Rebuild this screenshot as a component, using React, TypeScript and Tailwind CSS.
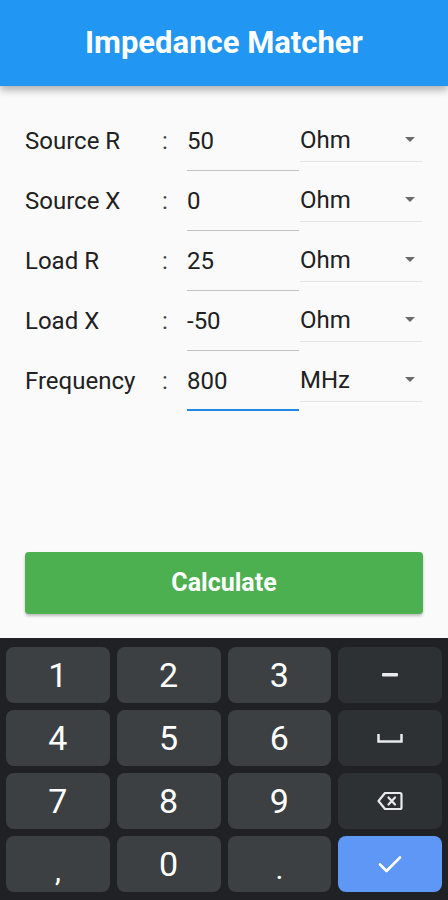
import React from "react";

const rows = [
  { label: "Source R", value: "50", unit: "Ohm" },
  { label: "Source X", value: "0", unit: "Ohm" },
  { label: "Load R", value: "25", unit: "Ohm" },
  { label: "Load X", value: "-50", unit: "Ohm" },
  { label: "Frequency", value: "800", unit: "MHz", focused: true },
];

function Arrow() {
  return (
    <svg width="10" height="5" viewBox="0 0 10 5" className="block">
      <path d="M0 0 L10 0 L5 5 Z" fill="#6b6b6b" />
    </svg>
  );
}

function Key({ children, variant = "num" }: { children: React.ReactNode; variant?: "num" | "fn" | "go" }) {
  const bg =
    variant === "num" ? "bg-[#3c4043]" : variant === "fn" ? "bg-[#2e3134]" : "bg-[#5e97f6]";
  return (
    <div
      className={`${bg} h-[56px] rounded-[8px] flex items-center justify-center text-white text-[34px] leading-none`}
    >
      {children}
    </div>
  );
}

export default function App() {
  return (
    <div
      className="w-[448px] h-[900px] bg-[#fafafa] flex flex-col overflow-hidden"
      style={{ fontFamily: "Roboto, 'Noto Sans', sans-serif" }}
    >
      <div className="h-[86px] bg-[#2196f3] flex items-center justify-center shadow-[0_4px_8px_rgba(0,0,0,0.3)] relative z-10 shrink-0">
        <span className="text-white text-[31px] font-bold">Impedance Matcher</span>
      </div>

      <div className="flex flex-col px-[25px] pt-[25px] flex-1">
        {rows.map((r) => (
          <div key={r.label} className="flex h-[60px] items-start">
            <div className="w-[137px] h-[60px] flex items-center text-[24px] text-[#212121]">{r.label}</div>
            <div className="w-[25px] h-[60px] flex items-center text-[24px] text-[#424242]">:</div>
            <div
              className={`w-[112px] h-[60px] flex items-center text-[24px] text-[#212121] ${
                r.focused ? "border-b-2 border-[#1e88e5]" : "border-b border-[#c2c2c2]"
              }`}
            >
              <span className={r.focused ? "pt-[2px]" : ""}>{r.value}</span>
            </div>
            <div className="w-[122px] ml-[1px] h-[51px] pt-[8px] flex items-center justify-between border-b border-[#e3e3e3] text-[24px] text-[#212121]">
              <span>{r.unit}</span>
              <span className="mr-[7px] mt-[-1px]">
                <Arrow />
              </span>
            </div>
          </div>
        ))}

        <div className="mt-[141px] h-[62px] rounded-[4px] bg-[#4caf50] shadow-[0_2px_3px_rgba(0,0,0,0.25)] flex items-center justify-center">
          <span className="text-white text-[25px] font-bold">Calculate</span>
        </div>
      </div>

      <div className="h-[262px] bg-[#202124] shrink-0 px-[6px] pt-[9px] pb-[8px] grid grid-cols-4 gap-x-[7px] gap-y-[7px] content-start">
        <Key>1</Key>
        <Key>2</Key>
        <Key>3</Key>
        <Key variant="fn">
          <svg width="16" height="4" viewBox="0 0 16 4">
            <rect x="0" y="0" width="16" height="3.5" rx="1" fill="#e8eaed" />
          </svg>
        </Key>
        <Key>4</Key>
        <Key>5</Key>
        <Key>6</Key>
        <Key variant="fn">
          <svg width="26" height="10" viewBox="0 0 26 10">
            <path d="M1.5 1 V8.5 H24.5 V1" fill="none" stroke="#e8eaed" strokeWidth="2.5" />
          </svg>
        </Key>
        <Key>7</Key>
        <Key>8</Key>
        <Key>9</Key>
        <Key variant="fn">
          <svg width="26" height="20" viewBox="0 0 26 20">
            <path
              d="M8 2 H23 Q24.5 2 24.5 3.5 V16.5 Q24.5 18 23 18 H8 L1.5 10 Z"
              fill="none"
              stroke="#e8eaed"
              strokeWidth="2.2"
              strokeLinejoin="round"
            />
            <path d="M11.5 6.5 L18 13.5 M18 6.5 L11.5 13.5" stroke="#e8eaed" strokeWidth="2.2" strokeLinecap="round" />
          </svg>
        </Key>
        <Key>
          <span className="mt-[14px] text-[30px]">,</span>
        </Key>
        <Key>0</Key>
        <Key>
          <span className="mt-[10px] text-[30px]">.</span>
        </Key>
        <Key variant="go">
          <svg width="24" height="18" viewBox="0 0 24 18">
            <path d="M2 9.5 L8.5 16 L22 2.5" fill="none" stroke="#ffffff" strokeWidth="2.6" strokeLinecap="round" strokeLinejoin="round" />
          </svg>
        </Key>
      </div>
    </div>
  );
}
